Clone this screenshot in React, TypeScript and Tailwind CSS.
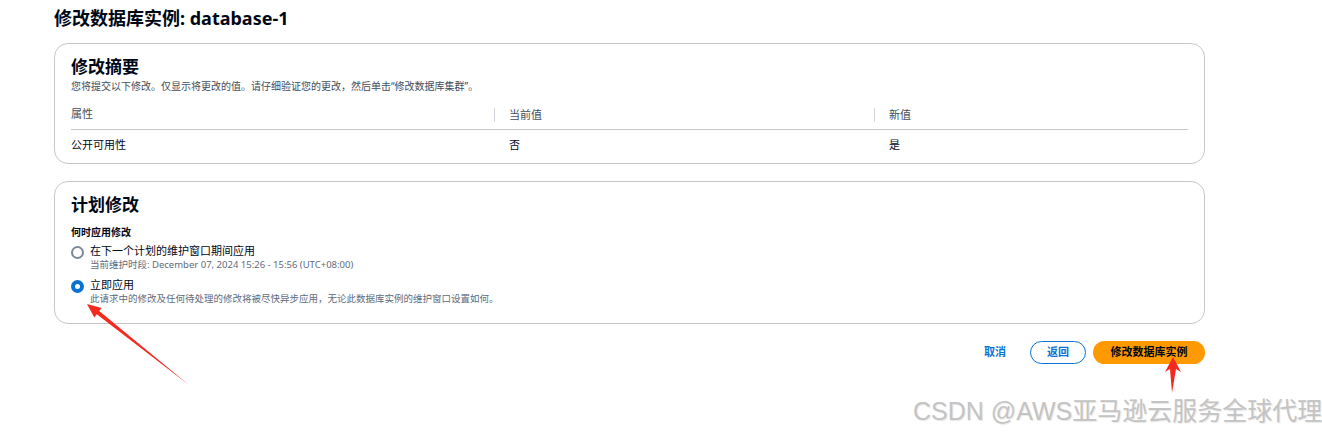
const font = { fontFamily: '"Noto Sans", "Noto Sans CJK SC", sans-serif' };

function Radio({ checked }: { checked?: boolean }) {
  return checked ? (
    <span className="mt-[2px] flex h-[13px] w-[13px] shrink-0 items-center justify-center rounded-full bg-[#0972d3]">
      <span className="h-[5px] w-[5px] rounded-full bg-white" />
    </span>
  ) : (
    <span className="mt-[2px] h-[13px] w-[13px] shrink-0 rounded-full border-2 border-[#7d8998] bg-white" />
  );
}

export default function App() {
  return (
    <div
      className="relative h-[434px] w-[1322px] overflow-hidden bg-white pl-[54px] text-[#000716]"
      style={font}
    >
      {/* Title */}
      <h1 className="pt-[6px] text-[18px] font-bold leading-[24px]">修改数据库实例: database-1</h1>

      {/* Summary card */}
      <section className="mt-[13px] w-[1151px] rounded-[14px] border border-[#c6c6cd] px-[16px] pb-[3px] pt-[11px]">
        <h2 className="text-[17px] font-bold leading-[24px]">修改摘要</h2>
        <p className="text-[10px] leading-[14px] text-[#414d5c]">
          您将提交以下修改。仅显示将更改的值。请仔细验证您的更改，然后单击“修改数据库集群”。
        </p>
        <div className="mt-[8px] grid grid-cols-[423px_380px_1fr] border-b border-[#c6c6cd] text-[11px] text-[#414d5c]">
          <div className="py-[6px] leading-[14px]">属性</div>
          <div className="my-[7px] border-l border-[#d1d5db] pl-[14px] leading-[14px]">当前值</div>
          <div className="my-[7px] border-l border-[#d1d5db] pl-[14px] leading-[14px]">新值</div>
        </div>
        <div className="grid grid-cols-[423px_380px_1fr] text-[11px] text-[#000716]">
          <div className="py-[8px] leading-[14px]">公开可用性</div>
          <div className="py-[8px] pl-[15px] leading-[14px]">否</div>
          <div className="py-[8px] pl-[15px] leading-[14px]">是</div>
        </div>
      </section>

      {/* Schedule card */}
      <section className="mt-[17px] w-[1151px] rounded-[14px] border border-[#c6c6cd] px-[16px] pb-[18px] pt-[11px]">
        <h2 className="text-[17px] font-bold leading-[24px]">计划修改</h2>
        <div className="mt-[8px] text-[10px] font-bold leading-[14px]">何时应用修改</div>
        <div className="mt-[5px] flex gap-[6px]">
          <Radio />
          <div>
            <div className="text-[11px] leading-[14px]">在下一个计划的维护窗口期间应用</div>
            <div className="text-[9.5px] leading-[14px] text-[#5f6b7a]">
              当前维护时段: December 07, 2024 15:26 - 15:56 (UTC+08:00)
            </div>
          </div>
        </div>
        <div className="mt-[6px] flex gap-[6px]">
          <Radio checked />
          <div>
            <div className="text-[11px] leading-[14px]">立即应用</div>
            <div className="text-[9.5px] leading-[13px] text-[#5f6b7a]">
              此请求中的修改及任何待处理的修改将被尽快异步应用，无论此数据库实例的维护窗口设置如何。
            </div>
          </div>
        </div>
      </section>

      {/* Actions */}
      <div className="mt-[17px] flex w-[1151px] items-center justify-end gap-[7px] text-[11px] font-bold">
        <button className="mr-[17px] text-[#0972d3]">取消</button>
        <button className="h-[23px] w-[56px] rounded-full border border-[#0972d3] text-[#0972d3]">返回</button>
        <button className="h-[23px] w-[112px] rounded-full bg-[#ff9900] text-[#000716]">修改数据库实例</button>
      </div>

      {/* Annotation arrows */}
      <svg className="pointer-events-none absolute left-0 top-0" width="1322" height="434">
        <polygon
          points="189,385 96.8,314.3 94.3,317.4 87,304 101.7,308 99.2,311.1"
          fill="#f52a1f"
        />
        <polygon points="1172,393 1170,369 1165,372 1173,357 1181,372 1176,369" fill="#f52a1f" />
      </svg>

      {/* Watermark */}
      <div
        className="pointer-events-none absolute left-[913px] top-[396px] whitespace-nowrap text-[25px] font-normal leading-[30px] text-[#c4c4c4]"
        style={{ fontFamily: '"Liberation Sans", "Noto Sans CJK SC", sans-serif', textShadow: '1px 1px 1px #e6e6e6' }}
      >
        CSDN @AWS亚马逊云服务全球代理
      </div>
    </div>
  );
}
